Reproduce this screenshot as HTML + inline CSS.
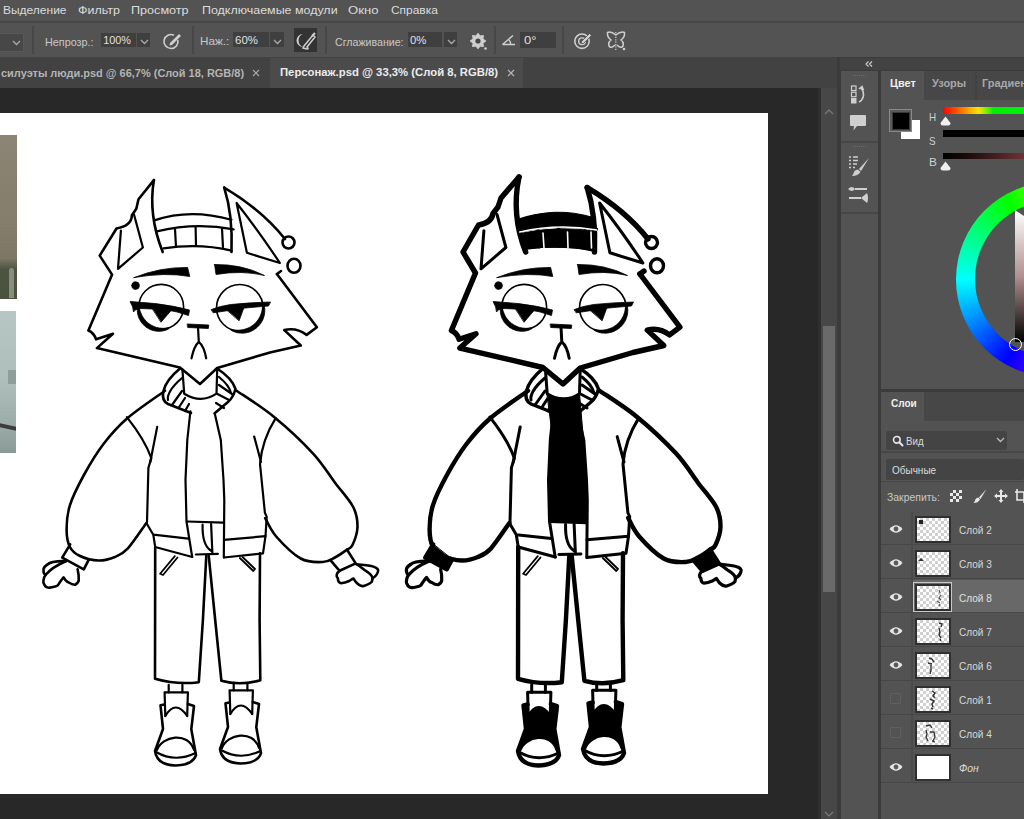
<!DOCTYPE html>
<html><head><meta charset="utf-8">
<style>
*{margin:0;padding:0;box-sizing:border-box}
html,body{width:1024px;height:819px;overflow:hidden;background:#282828;font-family:"Liberation Sans",sans-serif}
.a{position:absolute}
.tx{position:absolute;white-space:nowrap;line-height:1;transform-origin:0 0}
.box{position:absolute;background:#3f3f3f}
.sep{position:absolute;width:2px;background:#474747}
</style></head>
<body>
<!-- menu -->
<div class="a" style="left:0;top:0;width:1024px;height:21px;background:#535353"></div>
<div class="a" style="left:0;top:21px;width:1024px;height:2px;background:#474747"></div>
<!-- toolbar -->
<div class="a" style="left:0;top:23px;width:1024px;height:34px;background:#535353"></div>

<div class="a" style="left:0;top:33px;width:24px;height:19px;background:#474747;border:1px solid #585858;border-left:none"></div>
<div class="sep" style="left:32px;top:26px;height:28px"></div>
<div class="box" style="left:101px;top:33px;width:35px;height:14px"></div>
<div class="box" style="left:137px;top:33px;width:13px;height:14px"></div>
<div class="sep" style="left:192px;top:26px;height:28px"></div>
<div class="box" style="left:233px;top:32px;width:36px;height:15px"></div>
<div class="box" style="left:270px;top:32px;width:14px;height:15px"></div>
<div class="a" style="left:294px;top:28px;width:23px;height:24px;background:#333"></div>
<div class="sep" style="left:325px;top:26px;height:28px"></div>
<div class="box" style="left:408px;top:32px;width:34px;height:15px"></div>
<div class="box" style="left:444px;top:32px;width:13px;height:15px"></div>
<div class="sep" style="left:494px;top:26px;height:28px"></div>
<div class="box" style="left:520px;top:32px;width:36px;height:16px"></div>
<div class="sep" style="left:562px;top:26px;height:28px"></div>
<!-- tabs -->
<div class="a" style="left:0;top:57px;width:838px;height:31px;background:#424242"></div>
<div class="a" style="left:270px;top:58px;width:253px;height:30px;background:#4b4b4b"></div>
<!-- canvas area -->
<div class="a" style="left:0;top:88px;width:818px;height:731px;background:#282828"></div>
<div class="a" style="left:0;top:113px;width:768px;height:681px;background:#ffffff"></div>
<div class="a" style="left:0;top:135px;width:17px;height:164px;background:linear-gradient(180deg,#8c8474 0%,#857d6c 55%,#7d7766 75%,#4e5442 82%,#4a513f 100%)"></div>
<div class="a" style="left:9px;top:268px;width:5px;height:30px;background:#8a8c80;border-radius:3px 3px 0 0"></div>
<div class="a" style="left:0;top:311px;width:16px;height:142px;background:linear-gradient(180deg,#b6c6c2 0%,#aebeba 50%,#9cada9 80%,#8a9a96 100%)"></div>
<div class="a" style="left:8px;top:370px;width:8px;height:14px;background:#8e9e9a"></div>
<div class="a" style="left:0;top:425px;width:16px;height:4px;background:#3c3c3c;transform:skewY(12deg)"></div>
<!-- scrollbar -->
<div class="a" style="left:818px;top:88px;width:3px;height:731px;background:#2f2f2f"></div>
<div class="a" style="left:821px;top:88px;width:16px;height:731px;background:#474747"></div>
<div class="a" style="left:823px;top:326px;width:12px;height:266px;background:#6a6a6a"></div>
<!-- right side -->
<div class="a" style="left:837px;top:57px;width:187px;height:762px;background:#3b3b3b"></div>
<div class="a" style="left:840px;top:58px;width:184px;height:12px;background:#434343"></div>
<div class="a" style="left:841px;top:71px;width:37px;height:748px;background:#535353"></div>
<div class="a" style="left:841px;top:141px;width:37px;height:2px;background:#474747"></div>
<div class="a" style="left:841px;top:212px;width:37px;height:2px;background:#474747"></div>
<div class="a" style="left:881px;top:71px;width:143px;height:318px;background:#535353"></div>
<div class="a" style="left:924px;top:71px;width:100px;height:29px;background:#474747"></div>
<div class="a" style="left:975px;top:71px;width:2px;height:29px;background:#424242"></div>
<div class="a" style="left:881px;top:392px;width:143px;height:427px;background:#535353"></div>
<div class="a" style="left:924px;top:392px;width:100px;height:29px;background:#474747"></div>
<svg class="a" style="left:0;top:0" width="1024" height="819" viewBox="0 0 1024 819">
<g clip-path="url(#cv)">
<g transform="translate(0,0)" fill="none" stroke="#000" stroke-linecap="round" stroke-linejoin="round">
<path d="M153.9,180.1 L138.5,199.2 L136.3,208.7 L131.9,215.3 Q131.5,226 116.5,228.5 L99.7,255.6 L112.1,274.6 L88.4,330.5 Q94,333 96.1,339.3 L113,333.8 L96.9,348.1 L179.9,367.5 L200,384 L217.2,368 L270,352.5 L300.8,345.5 L284.3,330.1 Q296,327 306.6,334.9 L316.9,327.2 L276.9,274" stroke-width="2.6"/>
<path d="M277,274 L281,271" stroke-width="2.6"/>
<path d="M153.9,180.1 Q148,215 162.7,252" stroke-width="2.6"/>
<path d="M224.2,187.6 Q262,210 285,239" stroke-width="2.6"/>
<path d="M224.2,187.6 Q233,215 231.5,252" stroke-width="2.6"/>
<path d="M165.0,390.7 C158.7,395.3 137.2,409.6 127.0,418.5 C116.8,427.4 110.6,434.7 103.5,444.0 C96.4,453.3 89.8,464.3 84.2,474.5 C78.6,484.7 72.8,496.1 69.9,505.3 C67.0,514.5 66.6,522.5 66.6,529.5 C66.6,536.5 67.7,542.6 69.9,547.0 C72.1,551.4 75.2,553.8 80.0,556.0 C84.8,558.2 92.8,560.3 98.6,560.5 C104.4,560.7 110.1,559.0 115.0,557.0 C119.9,555.0 122.7,554.1 127.9,548.4 C133.1,542.7 143.3,527.2 146.4,523.0" stroke-width="2.6"/>
<path d="M70.2,544.4 L62.2,557.6 L83.8,569.3 L88.9,559.4" stroke-width="2.6"/>
<path d="M236.6,390.7 C242.8,395.0 261.1,406.3 273.8,416.7 C286.5,427.1 302.7,442.3 312.9,453.3 C323.1,464.3 328.3,473.8 335.0,482.7 C341.7,491.6 349.4,499.7 353.2,507.0 C356.9,514.3 357.6,520.4 357.5,526.7 C357.4,533.0 354.3,541.1 352.5,545.0 C350.7,548.9 349.4,547.9 346.5,550.0 C343.6,552.1 339.0,555.5 335.0,557.5 C331.0,559.5 328.4,561.8 322.7,562.0 C317.0,562.2 308.4,562.8 300.7,558.5 C292.9,554.2 282.1,543.2 276.2,536.5 C270.3,529.8 267.0,521.1 265.2,518.0" stroke-width="2.6"/>
<path d="M346.9,549.5 L355.7,563.4 L339.6,570.8 L330.4,560.1" stroke-width="2.6"/>
<path d="M155.2,547 L155,678.8 Q177,685 198.8,682.2 L202.9,620 L206.3,555.7" stroke-width="2.6"/>
<path d="M208.7,555.7 L215.2,620 L221.4,680.8 Q240,686 260.3,680.2 L259.6,620 L260,553.3" stroke-width="2.6"/>
<path d="M 164.6 704.5 L 160.5 705.3 L 163.0 729.0 L 155.0 751.0 Q 157.0 765.0 175.5 765.5 Q 193.0 765.0 196.0 755.2 L 191.3 729.2 L 194.0 706.0 L 187.9 704.0" stroke-width="2.6"/>
<path d="M 229.6 702.5 L 225.5 703.3 L 228.0 727.0 L 220.0 749.0 Q 222.0 763.0 240.5 763.5 Q 258.0 763.0 261.0 753.2 L 256.3 727.2 L 259.0 704.0 L 252.9 702.0" stroke-width="2.6"/>
<path d="M120.9,230.7 L118,268.8 L142.9,247.5 L134,214.5" stroke-width="2.2"/>
<path d="M236.6,203 L246.9,252.8 L279.9,263 Q258,230 236.6,203 Z" stroke-width="2.2"/>
<path d="M154.3,220.4 Q190,208 231.5,219.8" stroke-width="2.2"/>
<path d="M156.8,231.4 Q195,222 233.7,229.3" stroke-width="2.2"/>
<path d="M163.4,248.3 Q200,243 231.5,250.6" stroke-width="2.2"/>
<path d="M175,229 L176,247 M195.6,227 L196,246 M222,228.6 L223,247.6" stroke-width="2.2"/>
<path d="M198,327 L198.8,342 M191.5,358.3 Q194,346 198.8,341.8 Q204,346 206.2,358.3" stroke-width="2.2"/>
<path d="M182.4,369.3 L184.2,393.7 Q201,404 216.5,393.7 L217.2,369.3" stroke-width="2.2"/>
<path d="M182,378 C170,388 167,396 168,400" stroke-width="2.2"/>
<path d="M172,405 L182,391 M178.5,408 L185,398 M185,411 L189,404" stroke-width="2.2"/>
<path d="M219,377 Q229,385 231,393" stroke-width="2.2"/>
<path d="M219,385 L232,394 M217.5,394 L229,400 M216,403 L224,408" stroke-width="2.2"/>
<path d="M126.9,417.1 Q145,440 151.3,458.1 L148.4,467.9 L147,522" stroke-width="2.2"/>
<path d="M157.2,426.9 L150.3,462" stroke-width="2.2"/>
<path d="M146.4,523 L153.3,534.7 L188.4,538.6 M153.3,534.7 L155.2,547 L192.3,557" stroke-width="2.2"/>
<path d="M190.4,411.25 L187.3,440 L185.5,480 L186.5,521.5 L192.2,557" stroke-width="2.2"/>
<path d="M214.7,413.3 L220.8,440 L223.5,480 L224.3,500 L223.8,557.5" stroke-width="2.2"/>
<path d="M187.3,521.5 L223.3,522.7" stroke-width="2.2"/>
<path d="M224,539.8 L265.5,536.2 L263,553.3 L224,557.5" stroke-width="2.2"/>
<path d="M275.7,418.1 Q262,440 260,464 L264.9,512.8 L266.7,516.6 L265.5,536.2" stroke-width="2.2"/>
<path d="M254.2,436.6 L261,462" stroke-width="2.2"/>
<path d="M195.9,554.5 L217.9,553.9" stroke-width="2.2"/>
<path d="M202.6,524.6 Q202,545 211.1,550.8 M211.1,524 L212.4,553.3" stroke-width="2.2"/>
<path d="M 168.7 684.8 L 168.7 692.3 M 182.4 684.8 L 182.4 692.3" stroke-width="2.2"/>
<path d="M 164.6 692.3 L 187.9 692.3 M 164.6 692.3 L 165.3 716.0 M 187.9 692.3 L 187.2 716.0" stroke-width="2.2"/>
<path d="M 165.3 716.0 Q 175.5 699.0 187.2 716.0" stroke-width="2.2"/>
<path d="M 157.0 750.0 C 162.0 736.0 188.0 731.0 194.0 750.0" stroke-width="2.2"/>
<path d="M 156.0 752.0 Q 175.0 763.0 195.5 753.0" stroke-width="2.2"/>
<path d="M 233.7 682.8 L 233.7 690.3 M 247.4 682.8 L 247.4 690.3" stroke-width="2.2"/>
<path d="M 229.6 690.3 L 252.9 690.3 M 229.6 690.3 L 230.3 714.0 M 252.9 690.3 L 252.2 714.0" stroke-width="2.2"/>
<path d="M 230.3 714.0 Q 240.5 697.0 252.2 714.0" stroke-width="2.2"/>
<path d="M 222.0 748.0 C 227.0 734.0 253.0 729.0 259.0 748.0" stroke-width="2.2"/>
<path d="M 221.0 750.0 Q 240.0 761.0 260.5 751.0" stroke-width="2.2"/>
<path d="M180,368.5 C160,385 160,400 168,404 L191,413" stroke-width="2.6"/>
<path d="M217,368.5 Q232,378 235.5,389 Q233,398 228,402 L214.7,413.3" stroke-width="2.6"/>
<path d="M65.8,561.2 C58,561 50,562 47.5,564.5 C43,567 42,571 45.3,575.2 C43,579 43,583 44,584 C45,587 48,588 49.7,587.6 C53,587 56,587 57.8,585.4 C60,582 62,579 63.6,577.4 C65,580 67,582 68.8,582.5 C71,584 73,585 75.4,584.7 C78,583 79,581 78.7,579.6 C79,575 78,571 77.6,569.3" stroke-width="2.6"/>
<path d="M65.8,561.2 Q52,567 45.3,575.2" stroke-width="2.6"/>
<path d="M339.6,570.8 C336,573 336,577 337.8,578.1 C338,582 340,583 341,583.2 C344,583 347,582 349.1,581 C351,580 352,579 353.5,578.5 C355,581 356,583 357.9,584 C360,586 362,586 363,586.2 C367,585 370,584 371.8,581.8 C373,579 372,576 370.4,574.4 C368,572 366,571 364.5,570 C361,567 358,565 356.4,564.2" stroke-width="2.6"/>
<path d="M356.4,564.2 C362,565 370,565 374.7,567.1 C377,568 379,570 378,571.5 C377,575 375,577 372.5,578.1" stroke-width="2.6"/>
<path d="M174.8,556.2 L160.1,573.75 L163,575 L177.5,557.5" stroke-width="1.8"/>
<path d="M239.8,558 L253.3,571 L255,569 L242.5,557" stroke-width="1.8"/>
<path d="M282.5,242.5 a6,6 0 1,0 12,0 a6,6 0 1,0 -12,0 Z" stroke-width="2.6"/>
<path d="M287.5,265.8 a6.5,7 0 1,0 13,0 a6.5,7 0 1,0 -13,0 Z" stroke-width="2.6"/>
<path d="M138.8,306.8 a22.4,22.4 0 1,0 44.8,0 a22.4,22.4 0 1,0 -44.8,0 Z" stroke-width="1.6"/>
<path d="M216.5,307.8 a23.3,23.3 0 1,0 46.6,0 a23.3,23.3 0 1,0 -46.6,0 Z" stroke-width="1.6"/>
<path d="M134,277.6 Q160,267 187.6,267.5 L189.8,276.5 Q165,272 134,277.6 Z" fill="#000" stroke="#000" stroke-width="0.8"/>
<path d="M214.6,264.5 L216,274.5 Q242,270 264.5,275.5 Q242,264 214.6,264.5 Z" fill="#000" stroke="#000" stroke-width="0.8"/>
<path d="M131.8,285.6 a3.8,3.8 0 1,0 7.6,0 a3.8,3.8 0 1,0 -7.6,0 Z" fill="#000" stroke="#000" stroke-width="0.8"/>
<path d="M137.4,307.6 L137.3,309.1 L137.3,310.7 L137.4,312.2 L137.6,313.7 L138.0,315.2 L138.4,316.7 L139.0,318.2 L139.7,319.6 L140.5,321.0 L141.3,322.3 L142.3,323.6 L143.4,324.7 L144.5,325.8 L145.8,326.9 L147.1,327.8 L148.4,328.6 L149.8,329.3 L151.3,329.9 L152.8,330.4 L154.3,330.8 L155.9,331.1 L157.4,331.3 L159.0,331.3 L160.5,331.3 L162.0,331.1 L163.6,330.8 L165.0,330.4 L166.4,329.9 L167.8,329.3 L169.1,328.6 L168.8,327.7 L167.4,327.9 L166.0,328.1 L164.7,328.2 L163.3,328.3 L161.9,328.3 L160.6,328.1 L159.3,328.0 L158.0,327.7 L156.7,327.4 L155.4,327.0 L154.2,326.5 L153.0,326.0 L151.8,325.4 L150.7,324.8 L149.6,324.0 L148.5,323.3 L147.5,322.4 L146.5,321.6 L145.6,320.6 L144.8,319.6 L143.9,318.6 L143.2,317.5 L142.5,316.4 L141.9,315.3 L141.3,314.1 L140.8,312.8 L140.3,311.5 L139.9,310.2 L139.6,308.9 L139.4,307.6 Z" fill="#000" stroke="#000" stroke-width="0.8"/>
<path d="M264.0,304.4 L264.4,306.1 L264.6,307.8 L264.8,309.5 L264.8,311.3 L264.6,313.1 L264.4,314.8 L263.9,316.6 L263.4,318.3 L262.7,320.0 L261.8,321.6 L260.9,323.1 L259.8,324.6 L258.6,325.9 L257.3,327.2 L255.9,328.4 L254.4,329.4 L252.8,330.4 L251.2,331.2 L249.5,331.9 L247.8,332.4 L246.0,332.8 L244.3,333.1 L242.5,333.2 L240.7,333.1 L238.9,333.0 L237.2,332.7 L235.5,332.2 L233.9,331.7 L232.3,331.0 L230.8,330.1 L231.1,329.2 L232.7,329.6 L234.3,329.9 L235.9,330.1 L237.4,330.2 L239.0,330.2 L240.6,330.0 L242.1,329.8 L243.6,329.5 L245.1,329.1 L246.6,328.6 L248.0,328.1 L249.4,327.4 L250.7,326.7 L252.0,325.8 L253.2,324.9 L254.4,324.0 L255.5,322.9 L256.5,321.8 L257.4,320.6 L258.3,319.4 L259.1,318.1 L259.9,316.7 L260.5,315.3 L261.1,313.9 L261.6,312.4 L261.9,310.9 L262.2,309.4 L262.4,307.8 L262.5,306.2 L262.5,304.6 Z" fill="#000" stroke="#000" stroke-width="0.8"/>
<path d="M130.5,301.5 Q143,302.5 155.6,303.6 Q175,306 189.5,310 L188.5,315.5 Q176,311 164,309.5 L140,308.5 Q135,309 133.5,312 Q133,306 131,303.5 Z" fill="#000" stroke="#000" stroke-width="0.8"/>
<path d="M211.4,309.5 Q220,306 230.6,304.5 Q250,302.5 270.5,302 L268.5,306 Q256,307 243.5,308.2 L213.5,312.8 Z" fill="#000" stroke="#000" stroke-width="0.8"/>
<path d="M151.5,307 L171.5,310 L161.2,322 Z" fill="#000" stroke="#000" stroke-width="0.8"/>
<path d="M226.5,309.5 L244.5,306 L239.2,320.5 Z" fill="#000" stroke="#000" stroke-width="0.8"/>
<path d="M187.5,324 L208.8,325 L208.3,328.5 L188,327.5 Z" fill="#000" stroke="#000" stroke-width="0.8"/>
</g>
<g transform="translate(363,0)" fill="none" stroke="#000" stroke-linecap="round" stroke-linejoin="round">
<path d="M156,177 L138,198 L135,207 L130,213.5 Q128.5,223 115.5,225 L100,252 L112.5,273 L88.4,330.5 Q94,333 96.1,339.3 L113,333.8 L96.9,348.1 L179.9,367.5 L200,384 L217.2,368 L270,352.5 L300.8,345.5 L284.3,330.1 Q296,327 306.6,334.9 L316.9,327.2 L276.9,274" stroke-width="5.4"/>
<path d="M277,274 L281,271" stroke-width="5.4"/>
<path d="M156,177 Q148,215 162.7,252" stroke-width="5.4"/>
<path d="M224.2,187.6 Q262,210 285,239" stroke-width="5.4"/>
<path d="M224.2,187.6 Q233,215 231.5,252" stroke-width="5.4"/>
<path d="M165.0,390.7 C158.7,395.3 137.2,409.6 127.0,418.5 C116.8,427.4 110.6,434.7 103.5,444.0 C96.4,453.3 89.8,464.3 84.2,474.5 C78.6,484.7 72.8,496.1 69.9,505.3 C67.0,514.5 66.6,522.5 66.6,529.5 C66.6,536.5 67.7,542.6 69.9,547.0 C72.1,551.4 75.2,553.8 80.0,556.0 C84.8,558.2 92.8,560.3 98.6,560.5 C104.4,560.7 110.1,559.0 115.0,557.0 C119.9,555.0 122.7,554.1 127.9,548.4 C133.1,542.7 143.3,527.2 146.4,523.0" stroke-width="4.4"/>
<path d="M70.2,544.4 L62.2,557.6 L83.8,569.3 L88.9,559.4" stroke-width="4.4"/>
<path d="M236.6,390.7 C242.8,395.0 261.1,406.3 273.8,416.7 C286.5,427.1 302.7,442.3 312.9,453.3 C323.1,464.3 328.3,473.8 335.0,482.7 C341.7,491.6 349.4,499.7 353.2,507.0 C356.9,514.3 357.6,520.4 357.5,526.7 C357.4,533.0 354.3,541.1 352.5,545.0 C350.7,548.9 349.4,547.9 346.5,550.0 C343.6,552.1 339.0,555.5 335.0,557.5 C331.0,559.5 328.4,561.8 322.7,562.0 C317.0,562.2 308.4,562.8 300.7,558.5 C292.9,554.2 282.1,543.2 276.2,536.5 C270.3,529.8 267.0,521.1 265.2,518.0" stroke-width="4.4"/>
<path d="M346.9,549.5 L355.7,563.4 L339.6,570.8 L330.4,560.1" stroke-width="4.4"/>
<path d="M155.2,547 L155,678.8 Q177,685 198.8,682.2 L202.9,620 L206.3,555.7" stroke-width="4.4"/>
<path d="M208.7,555.7 L215.2,620 L221.4,680.8 Q240,686 260.3,680.2 L259.6,620 L260,553.3" stroke-width="4.4"/>
<path d="M 164.6 704.5 L 160.5 705.3 L 163.0 729.0 L 155.0 751.0 Q 157.0 765.0 175.5 765.5 Q 193.0 765.0 196.0 755.2 L 191.3 729.2 L 194.0 706.0 L 187.9 704.0" stroke-width="4.4"/>
<path d="M 229.6 702.5 L 225.5 703.3 L 228.0 727.0 L 220.0 749.0 Q 222.0 763.0 240.5 763.5 Q 258.0 763.0 261.0 753.2 L 256.3 727.2 L 259.0 704.0 L 252.9 702.0" stroke-width="4.4"/>
<path d="M120.9,230.7 L118,268.8 L142.9,247.5 L134,214.5" stroke-width="3.0"/>
<path d="M236.6,203 L246.9,252.8 L279.9,263 Q258,230 236.6,203 Z" stroke-width="3.0"/>
<path d="M154.3,220.4 Q190,208 231.5,219.8" stroke-width="3.0"/>
<path d="M156.8,231.4 Q195,222 233.7,229.3" stroke-width="3.0"/>
<path d="M163.4,248.3 Q200,243 231.5,250.6" stroke-width="3.0"/>
<path d="M175,229 L176,247 M195.6,227 L196,246 M222,228.6 L223,247.6" stroke-width="3.0"/>
<path d="M198,327 L198.8,342 M191.5,358.3 Q194,346 198.8,341.8 Q204,346 206.2,358.3" stroke-width="3.0"/>
<path d="M182.4,369.3 L184.2,393.7 Q201,404 216.5,393.7 L217.2,369.3" stroke-width="3.0"/>
<path d="M182,378 C170,388 167,396 168,400" stroke-width="3.0"/>
<path d="M172,405 L182,391 M178.5,408 L185,398 M185,411 L189,404" stroke-width="3.0"/>
<path d="M219,377 Q229,385 231,393" stroke-width="3.0"/>
<path d="M219,385 L232,394 M217.5,394 L229,400 M216,403 L224,408" stroke-width="3.0"/>
<path d="M126.9,417.1 Q145,440 151.3,458.1 L148.4,467.9 L147,522" stroke-width="3.0"/>
<path d="M157.2,426.9 L150.3,462" stroke-width="3.0"/>
<path d="M146.4,523 L153.3,534.7 L188.4,538.6 M153.3,534.7 L155.2,547 L192.3,557" stroke-width="3.0"/>
<path d="M190.4,411.25 L187.3,440 L185.5,480 L186.5,521.5 L192.2,557" stroke-width="3.0"/>
<path d="M214.7,413.3 L220.8,440 L223.5,480 L224.3,500 L223.8,557.5" stroke-width="3.0"/>
<path d="M187.3,521.5 L223.3,522.7" stroke-width="3.0"/>
<path d="M224,539.8 L265.5,536.2 L263,553.3 L224,557.5" stroke-width="3.0"/>
<path d="M275.7,418.1 Q262,440 260,464 L264.9,512.8 L266.7,516.6 L265.5,536.2" stroke-width="3.0"/>
<path d="M254.2,436.6 L261,462" stroke-width="3.0"/>
<path d="M195.9,554.5 L217.9,553.9" stroke-width="3.0"/>
<path d="M202.6,524.6 Q202,545 211.1,550.8 M211.1,524 L212.4,553.3" stroke-width="3.0"/>
<path d="M 168.7 684.8 L 168.7 692.3 M 182.4 684.8 L 182.4 692.3" stroke-width="3.0"/>
<path d="M 164.6 692.3 L 187.9 692.3 M 164.6 692.3 L 165.3 716.0 M 187.9 692.3 L 187.2 716.0" stroke-width="3.0"/>
<path d="M 165.3 716.0 Q 175.5 699.0 187.2 716.0" stroke-width="3.0"/>
<path d="M 157.0 750.0 C 162.0 736.0 188.0 731.0 194.0 750.0" stroke-width="3.0"/>
<path d="M 156.0 752.0 Q 175.0 763.0 195.5 753.0" stroke-width="3.0"/>
<path d="M 233.7 682.8 L 233.7 690.3 M 247.4 682.8 L 247.4 690.3" stroke-width="3.0"/>
<path d="M 229.6 690.3 L 252.9 690.3 M 229.6 690.3 L 230.3 714.0 M 252.9 690.3 L 252.2 714.0" stroke-width="3.0"/>
<path d="M 230.3 714.0 Q 240.5 697.0 252.2 714.0" stroke-width="3.0"/>
<path d="M 222.0 748.0 C 227.0 734.0 253.0 729.0 259.0 748.0" stroke-width="3.0"/>
<path d="M 221.0 750.0 Q 240.0 761.0 260.5 751.0" stroke-width="3.0"/>
<path d="M180,368.5 C160,385 160,400 168,404 L191,413" stroke-width="3.4"/>
<path d="M217,368.5 Q232,378 235.5,389 Q233,398 228,402 L214.7,413.3" stroke-width="3.4"/>
<path d="M65.8,561.2 C58,561 50,562 47.5,564.5 C43,567 42,571 45.3,575.2 C43,579 43,583 44,584 C45,587 48,588 49.7,587.6 C53,587 56,587 57.8,585.4 C60,582 62,579 63.6,577.4 C65,580 67,582 68.8,582.5 C71,584 73,585 75.4,584.7 C78,583 79,581 78.7,579.6 C79,575 78,571 77.6,569.3" stroke-width="3.2"/>
<path d="M65.8,561.2 Q52,567 45.3,575.2" stroke-width="3.2"/>
<path d="M339.6,570.8 C336,573 336,577 337.8,578.1 C338,582 340,583 341,583.2 C344,583 347,582 349.1,581 C351,580 352,579 353.5,578.5 C355,581 356,583 357.9,584 C360,586 362,586 363,586.2 C367,585 370,584 371.8,581.8 C373,579 372,576 370.4,574.4 C368,572 366,571 364.5,570 C361,567 358,565 356.4,564.2" stroke-width="3.2"/>
<path d="M356.4,564.2 C362,565 370,565 374.7,567.1 C377,568 379,570 378,571.5 C377,575 375,577 372.5,578.1" stroke-width="3.2"/>
<path d="M174.8,556.2 L160.1,573.75 L163,575 L177.5,557.5" stroke-width="1.8"/>
<path d="M239.8,558 L253.3,571 L255,569 L242.5,557" stroke-width="1.8"/>
<path d="M282.5,242.5 a6,6 0 1,0 12,0 a6,6 0 1,0 -12,0 Z" stroke-width="3.4"/>
<path d="M287.5,265.8 a6.5,7 0 1,0 13,0 a6.5,7 0 1,0 -13,0 Z" stroke-width="3.4"/>
<path d="M138.8,306.8 a22.4,22.4 0 1,0 44.8,0 a22.4,22.4 0 1,0 -44.8,0 Z" stroke-width="1.6"/>
<path d="M216.5,307.8 a23.3,23.3 0 1,0 46.6,0 a23.3,23.3 0 1,0 -46.6,0 Z" stroke-width="1.6"/>
<path d="M134,277.6 Q160,267 187.6,267.5 L189.8,276.5 Q165,272 134,277.6 Z" fill="#000" stroke="#000" stroke-width="0.8"/>
<path d="M214.6,264.5 L216,274.5 Q242,270 264.5,275.5 Q242,264 214.6,264.5 Z" fill="#000" stroke="#000" stroke-width="0.8"/>
<path d="M131.8,285.6 a3.8,3.8 0 1,0 7.6,0 a3.8,3.8 0 1,0 -7.6,0 Z" fill="#000" stroke="#000" stroke-width="0.8"/>
<path d="M137.4,307.6 L137.3,309.1 L137.3,310.7 L137.4,312.2 L137.6,313.7 L138.0,315.2 L138.4,316.7 L139.0,318.2 L139.7,319.6 L140.5,321.0 L141.3,322.3 L142.3,323.6 L143.4,324.7 L144.5,325.8 L145.8,326.9 L147.1,327.8 L148.4,328.6 L149.8,329.3 L151.3,329.9 L152.8,330.4 L154.3,330.8 L155.9,331.1 L157.4,331.3 L159.0,331.3 L160.5,331.3 L162.0,331.1 L163.6,330.8 L165.0,330.4 L166.4,329.9 L167.8,329.3 L169.1,328.6 L168.8,327.7 L167.4,327.9 L166.0,328.1 L164.7,328.2 L163.3,328.3 L161.9,328.3 L160.6,328.1 L159.3,328.0 L158.0,327.7 L156.7,327.4 L155.4,327.0 L154.2,326.5 L153.0,326.0 L151.8,325.4 L150.7,324.8 L149.6,324.0 L148.5,323.3 L147.5,322.4 L146.5,321.6 L145.6,320.6 L144.8,319.6 L143.9,318.6 L143.2,317.5 L142.5,316.4 L141.9,315.3 L141.3,314.1 L140.8,312.8 L140.3,311.5 L139.9,310.2 L139.6,308.9 L139.4,307.6 Z" fill="#000" stroke="#000" stroke-width="0.8"/>
<path d="M264.0,304.4 L264.4,306.1 L264.6,307.8 L264.8,309.5 L264.8,311.3 L264.6,313.1 L264.4,314.8 L263.9,316.6 L263.4,318.3 L262.7,320.0 L261.8,321.6 L260.9,323.1 L259.8,324.6 L258.6,325.9 L257.3,327.2 L255.9,328.4 L254.4,329.4 L252.8,330.4 L251.2,331.2 L249.5,331.9 L247.8,332.4 L246.0,332.8 L244.3,333.1 L242.5,333.2 L240.7,333.1 L238.9,333.0 L237.2,332.7 L235.5,332.2 L233.9,331.7 L232.3,331.0 L230.8,330.1 L231.1,329.2 L232.7,329.6 L234.3,329.9 L235.9,330.1 L237.4,330.2 L239.0,330.2 L240.6,330.0 L242.1,329.8 L243.6,329.5 L245.1,329.1 L246.6,328.6 L248.0,328.1 L249.4,327.4 L250.7,326.7 L252.0,325.8 L253.2,324.9 L254.4,324.0 L255.5,322.9 L256.5,321.8 L257.4,320.6 L258.3,319.4 L259.1,318.1 L259.9,316.7 L260.5,315.3 L261.1,313.9 L261.6,312.4 L261.9,310.9 L262.2,309.4 L262.4,307.8 L262.5,306.2 L262.5,304.6 Z" fill="#000" stroke="#000" stroke-width="0.8"/>
<path d="M130.5,301.5 Q143,302.5 155.6,303.6 Q175,306 189.5,310 L188.5,315.5 Q176,311 164,309.5 L140,308.5 Q135,309 133.5,312 Q133,306 131,303.5 Z" fill="#000" stroke="#000" stroke-width="0.8"/>
<path d="M211.4,309.5 Q220,306 230.6,304.5 Q250,302.5 270.5,302 L268.5,306 Q256,307 243.5,308.2 L213.5,312.8 Z" fill="#000" stroke="#000" stroke-width="0.8"/>
<path d="M151.5,307 L171.5,310 L161.2,322 Z" fill="#000" stroke="#000" stroke-width="0.8"/>
<path d="M226.5,309.5 L244.5,306 L239.2,320.5 Z" fill="#000" stroke="#000" stroke-width="0.8"/>
<path d="M187.5,324 L208.8,325 L208.3,328.5 L188,327.5 Z" fill="#000" stroke="#000" stroke-width="0.8"/>
<path d="M154,221 Q190,205 232,218 L233.5,230 Q195,221 156.8,231.4 Z" fill="#000" stroke="#000" stroke-width="1"/>
<path d="M157,233.5 Q195,225 233.5,231.5 L232,250.6 Q200,245 163.5,248.5 Z" fill="#000" stroke="#000" stroke-width="1"/>
<path d="M184.2,393.7 Q201,404 216.5,393.7 L220.5,440 L223,480 L223,522 L187.5,521.5 L185.5,480 L188.5,430 Z" fill="#000" stroke="#000" stroke-width="1"/>
<path d="M70.2,544.4 L62.2,557.6 L83.8,569.3 L88.9,559.4 Z" fill="#000" stroke="#000" stroke-width="1"/>
<path d="M346.9,549.5 L355.7,563.4 L339.6,570.8 L330.4,560.1 Z" fill="#000" stroke="#000" stroke-width="1"/>
<path d="M 160.5 705.3 L 164.6 705.0 L 165.3 716.0 Q 175.5 699.0 187.2 716.0 L 187.9 704.5 L 194.0 706.0 L 191.3 729.2 L 194.5 749.0 C 188.0 733.0 162.0 736.0 156.5 749.0 L 163.0 729.0 Z" fill="#000" stroke="#000" stroke-width="1"/>
<path d="M 225.5 703.3 L 229.6 703.0 L 230.3 714.0 Q 240.5 697.0 252.2 714.0 L 252.9 702.5 L 259.0 704.0 L 256.3 727.2 L 259.5 747.0 C 253.0 731.0 227.0 734.0 221.5 747.0 L 228.0 727.0 Z" fill="#000" stroke="#000" stroke-width="1"/>
<path d="M156.8,232 Q195,223 233.7,230" stroke="#fff" stroke-width="1.6"/>
<path d="M180,233 L181,248 M204.5,232 L205,248 M228,232 L228.5,248" stroke="#fff" stroke-width="1.6"/>
</g>
</g><defs><clipPath id="cv"><rect x="0" y="113" width="768" height="681"/></clipPath></defs>
</svg>
<div class="a" style="left:901px;top:120px;width:19px;height:19px;background:#fff"></div>
<div class="a" style="left:889px;top:109px;width:23px;height:23px;border:1px solid #8a8a8a;background:#5a5a5a"></div>
<div class="a" style="left:891.5px;top:111.5px;width:18px;height:18px;background:#000;border:1px solid #3a3a3a"></div>
<div class="a" style="left:943px;top:106.5px;width:81px;height:7.5px;background:linear-gradient(90deg,#f00 0px,#ff6a00 17px,#ffe600 35px,#60f000 45px,#00f000 50px,#00f010 81px)"></div>
<div class="a" style="left:943px;top:130px;width:81px;height:6.5px;background:#000"></div>
<div class="a" style="left:943px;top:152.7px;width:81px;height:6.5px;background:linear-gradient(90deg,#000 0%,#1c0a0a 30%,#4a2222 70%,#6e3434 100%)"></div>
<svg class="a" style="left:939.5px;top:116px" width="11" height="10" viewBox="0 0 11 10"><path d="M5.5,0.5 L10.5,7 Q10.5,9.5 8,9.5 L3,9.5 Q0.5,9.5 0.5,7 Z" fill="#f0f0f0"/></svg>
<svg class="a" style="left:939.5px;top:161px" width="11" height="10" viewBox="0 0 11 10"><path d="M5.5,0.5 L10.5,7 Q10.5,9.5 8,9.5 L3,9.5 Q0.5,9.5 0.5,7 Z" fill="#f0f0f0"/></svg>
<div class="a" style="left:955.7px;top:181.5px;width:195px;height:195px;border-radius:50%;background:conic-gradient(rgb(127,255,0) 0deg,rgb(191,255,0) 15deg,rgb(255,255,0) 30deg,rgb(255,191,0) 45deg,rgb(255,127,0) 60deg,rgb(255,63,0) 75deg,rgb(255,0,0) 90deg,rgb(255,0,63) 105deg,rgb(255,0,127) 120deg,rgb(255,0,191) 135deg,rgb(255,0,255) 150deg,rgb(191,0,255) 165deg,rgb(127,0,255) 180deg,rgb(63,0,255) 195deg,rgb(0,0,255) 210deg,rgb(0,63,255) 225deg,rgb(0,127,255) 240deg,rgb(0,191,255) 255deg,rgb(0,255,255) 270deg,rgb(0,255,191) 285deg,rgb(0,255,127) 300deg,rgb(0,255,63) 315deg,rgb(0,255,0) 330deg,rgb(63,255,0) 345deg,rgb(127,255,0) 360deg)"></div>
<div class="a" style="left:975.2px;top:201.0px;width:156px;height:156px;border-radius:50%;background:#535353"></div>
<svg class="a" style="left:1012px;top:210px" width="12" height="132" viewBox="0 0 12 132"><defs><linearGradient id="sb" x1="0" y1="0" x2="0" y2="1"><stop offset="0" stop-color="#fff"/><stop offset="0.5" stop-color="#b09090"/><stop offset="1" stop-color="#000"/></linearGradient></defs><path d="M3,0 L12,6 L12,132 L3,132 Z" fill="url(#sb)"/></svg>
<div class="a" style="left:1009px;top:338px;width:13px;height:13px;border-radius:50%;border:1.5px solid #fff"></div>
<div class="a" style="left:881px;top:389px;width:143px;height:3px;background:#3b3b3b"></div>
<div class="a" style="left:886px;top:431px;width:121px;height:19px;background:#444444;border-radius:2px"></div>
<svg class="a" style="left:892px;top:435px" width="12" height="12" viewBox="0 0 12 12"><circle cx="4.8" cy="4.8" r="3.3" fill="none" stroke="#e8e8e8" stroke-width="1.6"/><path d="M7.3,7.3 L10.5,10.5" stroke="#e8e8e8" stroke-width="2" stroke-linecap="round"/></svg>
<svg class="a" style="left:996px;top:437px" width="9" height="6" viewBox="0 0 9 6"><path d="M1,1 L4.5,4.5 L8,1" fill="none" stroke="#bbb" stroke-width="1.3"/></svg>
<div class="a" style="left:881px;top:451px;width:143px;height:2px;background:#474747"></div>
<div class="a" style="left:886px;top:459px;width:138px;height:21px;background:#444444;border-radius:2px"></div>
<div class="a" style="left:881px;top:481px;width:143px;height:1px;background:#474747"></div>
<svg class="a" style="left:949px;top:489px" width="14" height="14" viewBox="0 0 14 14"><rect x="1" y="1" width="12" height="12" fill="#e8e8e8"/><rect x="1" y="1" width="3" height="3" fill="#555"/><rect x="7" y="1" width="3" height="3" fill="#555"/><rect x="4" y="4" width="3" height="3" fill="#555"/><rect x="10" y="4" width="3" height="3" fill="#555"/><rect x="1" y="7" width="3" height="3" fill="#555"/><rect x="7" y="7" width="3" height="3" fill="#555"/><rect x="4" y="10" width="3" height="3" fill="#555"/><rect x="10" y="10" width="3" height="3" fill="#555"/></svg>
<svg class="a" style="left:972px;top:488px" width="16" height="16" viewBox="0 0 16 16"><path d="M14.5,1 L7,9.5 L8.5,11 Z" fill="#e8e8e8"/><path d="M6.5,9.5 Q3,10 3,13 L1.5,15 Q6,15 8,11.5 Z" fill="#e8e8e8"/></svg>
<svg class="a" style="left:993px;top:488px" width="16" height="16" viewBox="0 0 16 16"><path d="M8,1 L10.5,4 L9,4 L9,7 L12,7 L12,5.5 L15,8 L12,10.5 L12,9 L9,9 L9,12 L10.5,12 L8,15 L5.5,12 L7,12 L7,9 L4,9 L4,10.5 L1,8 L4,5.5 L4,7 L7,7 L7,4 L5.5,4 Z" fill="#e8e8e8"/></svg>
<svg class="a" style="left:1014px;top:488px" width="12" height="16" viewBox="0 0 12 16"><path d="M3,1 L3,12 L12,12 M1,4 L10,4 L10,15" fill="none" stroke="#e8e8e8" stroke-width="1.6"/></svg>
<div class="a" style="left:881px;top:544px;width:143px;height:1px;background:#474747"></div>
<svg class="a" style="left:889px;top:524px" width="14" height="10" viewBox="0 0 14 10"><path d="M0.5,5 Q7,-2.5 13.5,5 Q7,12.5 0.5,5 Z" fill="#e6e6e6"/><circle cx="7" cy="5" r="2.4" fill="#5a5a5a"/></svg>
<div class="a" style="left:914.5px;top:515.5px;width:36px;height:27px;background:repeating-conic-gradient(#d0d0d0 0 25%,#ffffff 0 50%) 0 0/6px 6px;border:2px solid #2f2f2f"></div>
<div class="a" style="left:881px;top:578px;width:143px;height:1px;background:#474747"></div>
<svg class="a" style="left:889px;top:558px" width="14" height="10" viewBox="0 0 14 10"><path d="M0.5,5 Q7,-2.5 13.5,5 Q7,12.5 0.5,5 Z" fill="#e6e6e6"/><circle cx="7" cy="5" r="2.4" fill="#5a5a5a"/></svg>
<div class="a" style="left:914.5px;top:549.5px;width:36px;height:27px;background:repeating-conic-gradient(#d0d0d0 0 25%,#ffffff 0 50%) 0 0/6px 6px;border:2px solid #2f2f2f"></div>
<div class="a" style="left:911px;top:580px;width:113px;height:32px;background:#686868"></div>
<div class="a" style="left:881px;top:612px;width:143px;height:1px;background:#474747"></div>
<svg class="a" style="left:889px;top:592px" width="14" height="10" viewBox="0 0 14 10"><path d="M0.5,5 Q7,-2.5 13.5,5 Q7,12.5 0.5,5 Z" fill="#e6e6e6"/><circle cx="7" cy="5" r="2.4" fill="#5a5a5a"/></svg>
<div class="a" style="left:912.5px;top:582px;width:39px;height:30px;border:1.5px solid #c8c8c8"></div>
<div class="a" style="left:914.5px;top:583.5px;width:36px;height:27px;background:repeating-conic-gradient(#d0d0d0 0 25%,#ffffff 0 50%) 0 0/6px 6px;border:2px solid #2f2f2f"></div>
<div class="a" style="left:881px;top:646px;width:143px;height:1px;background:#474747"></div>
<svg class="a" style="left:889px;top:626px" width="14" height="10" viewBox="0 0 14 10"><path d="M0.5,5 Q7,-2.5 13.5,5 Q7,12.5 0.5,5 Z" fill="#e6e6e6"/><circle cx="7" cy="5" r="2.4" fill="#5a5a5a"/></svg>
<div class="a" style="left:914.5px;top:617.5px;width:36px;height:27px;background:repeating-conic-gradient(#d0d0d0 0 25%,#ffffff 0 50%) 0 0/6px 6px;border:2px solid #2f2f2f"></div>
<div class="a" style="left:881px;top:680px;width:143px;height:1px;background:#474747"></div>
<svg class="a" style="left:889px;top:660px" width="14" height="10" viewBox="0 0 14 10"><path d="M0.5,5 Q7,-2.5 13.5,5 Q7,12.5 0.5,5 Z" fill="#e6e6e6"/><circle cx="7" cy="5" r="2.4" fill="#5a5a5a"/></svg>
<div class="a" style="left:914.5px;top:651.5px;width:36px;height:27px;background:repeating-conic-gradient(#d0d0d0 0 25%,#ffffff 0 50%) 0 0/6px 6px;border:2px solid #2f2f2f"></div>
<div class="a" style="left:881px;top:714px;width:143px;height:1px;background:#474747"></div>
<div class="a" style="left:890px;top:693px;width:11px;height:11px;border:1px solid #5f5f5f;border-radius:1px"></div>
<div class="a" style="left:914.5px;top:685.5px;width:36px;height:27px;background:repeating-conic-gradient(#d0d0d0 0 25%,#ffffff 0 50%) 0 0/6px 6px;border:2px solid #2f2f2f"></div>
<div class="a" style="left:881px;top:748px;width:143px;height:1px;background:#474747"></div>
<div class="a" style="left:890px;top:727px;width:11px;height:11px;border:1px solid #5f5f5f;border-radius:1px"></div>
<div class="a" style="left:914.5px;top:719.5px;width:36px;height:27px;background:repeating-conic-gradient(#d0d0d0 0 25%,#ffffff 0 50%) 0 0/6px 6px;border:2px solid #2f2f2f"></div>
<div class="a" style="left:881px;top:782px;width:143px;height:1px;background:#474747"></div>
<svg class="a" style="left:889px;top:762px" width="14" height="10" viewBox="0 0 14 10"><path d="M0.5,5 Q7,-2.5 13.5,5 Q7,12.5 0.5,5 Z" fill="#e6e6e6"/><circle cx="7" cy="5" r="2.4" fill="#5a5a5a"/></svg>
<div class="a" style="left:914.5px;top:753.5px;width:36px;height:27px;background:#fff;border:2px solid #2f2f2f"></div>
<div class="a" style="left:911px;top:511px;width:1.5px;height:272px;background:#4a4a4a"></div>
<svg class="a" style="left:917px;top:518px" width="30" height="23" viewBox="0 0 30 23"><path d="M2,2 h4 v4 h-4 Z" fill="#222"/></svg>
<svg class="a" style="left:917px;top:552px" width="30" height="23" viewBox="0 0 30 23"><path d="M1,9 l3,-3 l3,3 Z" fill="#333"/></svg>
<svg class="a" style="left:917px;top:586px" width="30" height="23" viewBox="0 0 30 23"><path d="M22,4 l1,3 M24,9 l-2,3 l2,2 M20,15 l3,2 M23,18 l-1,2" stroke="#555" stroke-width="1.2" fill="none"/></svg>
<svg class="a" style="left:917px;top:620px" width="30" height="23" viewBox="0 0 30 23"><path d="M22,3 l3,1 l-1,3 M22,8 l1,4 l-1,3 l2,3 M23,19 l1,2" stroke="#333" stroke-width="1.4" fill="none"/></svg>
<svg class="a" style="left:917px;top:654px" width="30" height="23" viewBox="0 0 30 23"><path d="M12,4 l3,1 l2,3 M11,9 l4,1 M14,11 l0,5 l-1,4" stroke="#333" stroke-width="1.4" fill="none"/></svg>
<svg class="a" style="left:917px;top:688px" width="30" height="23" viewBox="0 0 30 23"><path d="M15,3 l3,2 l-2,3 l2,2 M13,11 l4,2 l-2,3 l1,3 M14,20 l2,1" stroke="#333" stroke-width="1.4" fill="none"/></svg>
<svg class="a" style="left:917px;top:722px" width="30" height="23" viewBox="0 0 30 23"><path d="M9,4 l4,-1 l2,3 M9,8 l1,4 l-1,3 l2,4 M13,10 l4,0 l1,5 l-2,4 M15,19 l3,1" stroke="#333" stroke-width="1.3" fill="none"/></svg>
<svg class="a" style="left:12px;top:40px" width="9" height="6" viewBox="0 0 9 6"><path d="M1,1 L4.5,4.5 L8,1" fill="none" stroke="#aaa" stroke-width="1.3"/></svg>
<svg class="a" style="left:140px;top:39px" width="9" height="6" viewBox="0 0 9 6"><path d="M1,1 L4.5,4.5 L8,1" fill="none" stroke="#aaa" stroke-width="1.3"/></svg>
<svg class="a" style="left:273px;top:39px" width="9" height="6" viewBox="0 0 9 6"><path d="M1,1 L4.5,4.5 L8,1" fill="none" stroke="#aaa" stroke-width="1.3"/></svg>
<svg class="a" style="left:447px;top:39px" width="9" height="6" viewBox="0 0 9 6"><path d="M1,1 L4.5,4.5 L8,1" fill="none" stroke="#aaa" stroke-width="1.3"/></svg>
<svg class="a" style="left:161px;top:31px" width="22" height="20" viewBox="0 0 22 20"><path d="M13,4.2 A7,7 0 1,0 16.8,9" fill="none" stroke="#cfcfcf" stroke-width="1.6"/><path d="M9,12 L18,3 L20,5 L11,14 L8.5,14.5 Z" fill="#cfcfcf"/></svg>
<svg class="a" style="left:295px;top:30px" width="22" height="21" viewBox="0 0 22 21"><path d="M8,4 A7,7 0 0,0 8,17 A5,5 0 0,1 8,4 Z" fill="#cfcfcf"/><path d="M9,16 L18,5 L20,7 L12,17 Q14,19 12,19 L8,18 Z" fill="none" stroke="#cfcfcf" stroke-width="1.5"/><path d="M17,6 L20,3" stroke="#cfcfcf" stroke-width="2"/></svg>
<svg class="a" style="left:469.5px;top:33px" width="18" height="18" viewBox="0 0 18 18"><path d="M15.5,8.0 L12.8,10.0 L13.3,13.3 L10.0,12.8 L8.0,15.5 L6.0,12.8 L2.7,13.3 L3.2,10.0 L0.5,8.0 L3.2,6.0 L2.7,2.7 L6.0,3.2 L8.0,0.5 L10.0,3.2 L13.3,2.7 L12.8,6.0 Z" fill="#cfcfcf" stroke="#cfcfcf" stroke-width="1.2" stroke-linejoin="round"/><circle cx="8" cy="8" r="2.6" fill="#484848"/><circle cx="15.5" cy="15.5" r="1.3" fill="#cfcfcf"/></svg>
<svg class="a" style="left:501px;top:34px" width="16" height="12" viewBox="0 0 16 12"><path d="M1.5,10.5 L14,10.5 M1.5,10.5 L12,1.5 M8,6 Q10,8 9.5,10.5" fill="none" stroke="#cfcfcf" stroke-width="1.4"/></svg>
<svg class="a" style="left:572px;top:31px" width="22" height="20" viewBox="0 0 22 20"><circle cx="10" cy="10.2" r="7.2" fill="none" stroke="#cfcfcf" stroke-width="1.6"/><circle cx="10" cy="10.2" r="3.3" fill="none" stroke="#cfcfcf" stroke-width="1.4"/><path d="M9,11 L17.5,2.5 L19.5,4.5 L11,13 Z" fill="#cfcfcf" stroke="#484848" stroke-width="0.7"/></svg>
<svg class="a" style="left:606px;top:31px" width="20" height="20" viewBox="0 0 20 20"><path d="M9.8,4 Q5,0 1.5,1.5 Q1,6 5,9 Q2,11 3,15 Q5,18 9,14 M9.8,4 Q15,0 18.5,1.5 Q19,6 15,9 Q18,11 17,15 Q15,18 11,14" fill="none" stroke="#cfcfcf" stroke-width="1.5"/><path d="M9.8,1 L9.8,19" stroke="#cfcfcf" stroke-width="1.2" stroke-dasharray="1.2,1.2"/><circle cx="18" cy="18" r="1.3" fill="#cfcfcf"/></svg>
<svg class="a" style="left:865px;top:61px" width="8" height="6" viewBox="0 0 8 6"><path d="M3.5,0.5 L1,3 L3.5,5.5 M7,0.5 L4.5,3 L7,5.5" fill="none" stroke="#d0d0d0" stroke-width="1.1"/></svg>
<div class="a" style="left:853px;top:75px;width:13px;height:2px;border-top:1px dotted #6a6a6a"></div>
<div class="a" style="left:853px;top:146px;width:13px;height:2px;border-top:1px dotted #6a6a6a"></div>
<svg class="a" style="left:850px;top:85px" width="18" height="20" viewBox="0 0 18 20"><rect x="1.5" y="1" width="4.5" height="4.5" fill="none" stroke="#cfcfcf" stroke-width="1.2"/><rect x="1.5" y="7.2" width="4.5" height="4.5" fill="none" stroke="#cfcfcf" stroke-width="1.2"/><rect x="1" y="13" width="5.5" height="5.5" fill="#cfcfcf"/><path d="M9,17 Q15,14 13,6 L11,3 M9,4 L12,1.5 L13.5,5" fill="none" stroke="#cfcfcf" stroke-width="1.6"/></svg>
<svg class="a" style="left:849px;top:114px" width="18" height="18" viewBox="0 0 18 18"><path d="M2,1 L16,1 Q17,1 17,2 L17,11 Q17,12 16,12 L8,12 L4.5,16.5 L5,12 L2,12 Q1,12 1,11 L1,2 Q1,1 2,1 Z" fill="#cfcfcf"/></svg>
<svg class="a" style="left:847px;top:155px" width="24" height="22" viewBox="0 0 24 22"><path d="M2,2 h2 M2,5.5 h2 M2,9 h2 M2,12.5 h2 M6,2 h5 M6,5.5 h5 M6,9 h4 M6,12.5 h2" stroke="#cfcfcf" stroke-width="1.5"/><path d="M22,3 L12,14 L14,16 Z" fill="#cfcfcf"/><path d="M11,14.5 Q7,15 6.5,18.5 L5,21 Q11,21 13.5,17 Z" fill="#cfcfcf"/></svg>
<svg class="a" style="left:846px;top:185px" width="24" height="19" viewBox="0 0 24 19"><path d="M2,4 Q6,0 9,4 Q6,8 2,4 Z" fill="#cfcfcf"/><path d="M9,4 L21,4" stroke="#cfcfcf" stroke-width="2"/><path d="M3,13 L15,13" stroke="#cfcfcf" stroke-width="2"/><path d="M15,13 L21,8 Q23,13 21,18 Z" fill="#cfcfcf"/></svg>
<svg class="a" style="left:824px;top:109px" width="10" height="6" viewBox="0 0 10 6"><path d="M1,5 L5,1 L9,5" fill="none" stroke="#777" stroke-width="1.3"/></svg>
<svg class="a" style="left:824px;top:811px" width="10" height="6" viewBox="0 0 10 6"><path d="M1,1 L5,5 L9,1" fill="none" stroke="#777" stroke-width="1.3"/></svg>
<svg class="a" style="left:252px;top:69px" width="8" height="8" viewBox="0 0 8 8"><path d="M1,1 L7,7 M7,1 L1,7" stroke="#a8a8a8" stroke-width="1.2"/></svg>
<svg class="a" style="left:507px;top:69px" width="8" height="8" viewBox="0 0 8 8"><path d="M1,1 L7,7 M7,1 L1,7" stroke="#b8b8b8" stroke-width="1.2"/></svg>
<span class="tx" style="left:2.87px;top:4.13px;font-size:11.66px;font-weight:normal;font-style:normal;color:#dcdcdc;transform:scaleX(1.0283)">Выделение</span>
<span class="tx" style="left:77.83px;top:4.13px;font-size:11.66px;font-weight:normal;font-style:normal;color:#dcdcdc;transform:scaleX(1.0684)">Фильтр</span>
<span class="tx" style="left:131.42px;top:4.13px;font-size:11.66px;font-weight:normal;font-style:normal;color:#dcdcdc;transform:scaleX(1.0817)">Просмотр</span>
<span class="tx" style="left:201.73px;top:4.13px;font-size:11.66px;font-weight:normal;font-style:normal;color:#dcdcdc;transform:scaleX(1.0676)">Подключаемые модули</span>
<span class="tx" style="left:348.38px;top:4.13px;font-size:11.66px;font-weight:normal;font-style:normal;color:#dcdcdc;transform:scaleX(1.1250)">Окно</span>
<span class="tx" style="left:390.68px;top:4.13px;font-size:11.66px;font-weight:normal;font-style:normal;color:#dcdcdc;transform:scaleX(1.0244)">Справка</span>
<span class="tx" style="left:45.06px;top:36.65px;font-size:11.52px;font-weight:normal;font-style:normal;color:#c8c8c8;transform:scaleX(0.9400)">Непрозр.:</span>
<span class="tx" style="left:103.20px;top:34.72px;font-size:10.84px;font-weight:normal;font-style:normal;color:#e0e0e0;transform:scaleX(1.0000)">100%</span>
<span class="tx" style="left:199.67px;top:36.06px;font-size:11.39px;font-weight:normal;font-style:normal;color:#c8c8c8;transform:scaleX(1.0269)">Наж.:</span>
<span class="tx" style="left:235.20px;top:35.57px;font-size:10.43px;font-weight:normal;font-style:normal;color:#e0e0e0;transform:scaleX(1.1000)">60%</span>
<span class="tx" style="left:334.68px;top:36.65px;font-size:11.52px;font-weight:normal;font-style:normal;color:#c8c8c8;transform:scaleX(0.9222)">Сглаживание:</span>
<span class="tx" style="left:409.94px;top:34.94px;font-size:10.70px;font-weight:normal;font-style:normal;color:#e0e0e0;transform:scaleX(1.0571)">0%</span>
<span class="tx" style="left:523.79px;top:34.94px;font-size:10.70px;font-weight:normal;font-style:normal;color:#e0e0e0;transform:scaleX(1.2125)">0°</span>
<span class="tx" style="left:0.50px;top:68.59px;font-size:10.29px;font-weight:bold;font-style:normal;color:#b4b4b4;transform:scaleX(1.0670)">силуэты люди.psd @ 66,7% (Слой 18, RGB/8)</span>
<span class="tx" style="left:280.12px;top:68.37px;font-size:10.43px;font-weight:bold;font-style:normal;color:#ececec;transform:scaleX(1.0840)">Персонаж.psd @ 33,3% (Слой 8, RGB/8)</span>
<span class="tx" style="left:889.54px;top:78.79px;font-size:10.29px;font-weight:bold;font-style:normal;color:#f0f0f0;transform:scaleX(1.0609)">Цвет</span>
<span class="tx" style="left:932.00px;top:78.79px;font-size:10.29px;font-weight:bold;font-style:normal;color:#a8a8a8;transform:scaleX(1.0645)">Узоры</span>
<span class="tx" style="left:981.94px;top:78.79px;font-size:10.29px;font-weight:bold;font-style:normal;color:#a8a8a8;transform:scaleX(1.0645)">Градиенты</span>
<span class="tx" style="left:928.87px;top:112.36px;font-size:10.56px;font-weight:normal;font-style:normal;color:#d0d0d0;transform:scaleX(0.9333)">H</span>
<span class="tx" style="left:928.87px;top:135.56px;font-size:10.56px;font-weight:normal;font-style:normal;color:#d0d0d0;transform:scaleX(0.9333)">S</span>
<span class="tx" style="left:928.68px;top:157.06px;font-size:10.56px;font-weight:normal;font-style:normal;color:#d0d0d0;transform:scaleX(1.1200)">B</span>
<span class="tx" style="left:891.00px;top:399.17px;font-size:10.43px;font-weight:bold;font-style:normal;color:#f0f0f0;transform:scaleX(0.9615)">Слои</span>
<span class="tx" style="left:906.48px;top:436.46px;font-size:10.56px;font-weight:normal;font-style:normal;color:#dcdcdc;transform:scaleX(0.9222)">Вид</span>
<span class="tx" style="left:892.45px;top:464.56px;font-size:10.56px;font-weight:normal;font-style:normal;color:#dcdcdc;transform:scaleX(0.9467)">Обычные</span>
<span class="tx" style="left:886.75px;top:491.91px;font-size:10.97px;font-weight:normal;font-style:normal;color:#c8c8c8;transform:scaleX(0.9500)">Закрепить:</span>
<span class="tx" style="left:958.55px;top:525.06px;font-size:10.56px;font-weight:normal;font-style:normal;color:#d8d8d8;transform:scaleX(0.9545)">Слой 2</span>
<span class="tx" style="left:958.55px;top:559.06px;font-size:10.56px;font-weight:normal;font-style:normal;color:#d8d8d8;transform:scaleX(0.9545)">Слой 3</span>
<span class="tx" style="left:958.55px;top:593.06px;font-size:10.56px;font-weight:normal;font-style:normal;color:#e0e0e0;transform:scaleX(0.9545)">Слой 8</span>
<span class="tx" style="left:958.55px;top:627.06px;font-size:10.56px;font-weight:normal;font-style:normal;color:#d8d8d8;transform:scaleX(0.9545)">Слой 7</span>
<span class="tx" style="left:958.55px;top:661.06px;font-size:10.56px;font-weight:normal;font-style:normal;color:#d8d8d8;transform:scaleX(0.9545)">Слой 6</span>
<span class="tx" style="left:958.55px;top:695.06px;font-size:10.56px;font-weight:normal;font-style:normal;color:#d8d8d8;transform:scaleX(0.9545)">Слой 1</span>
<span class="tx" style="left:958.55px;top:729.06px;font-size:10.56px;font-weight:normal;font-style:normal;color:#d8d8d8;transform:scaleX(0.9545)">Слой 4</span>
<span class="tx" style="left:958.82px;top:763.06px;font-size:10.56px;font-weight:normal;font-style:italic;color:#d8d8d8;transform:scaleX(0.9842)">Фон</span>
</body></html>
